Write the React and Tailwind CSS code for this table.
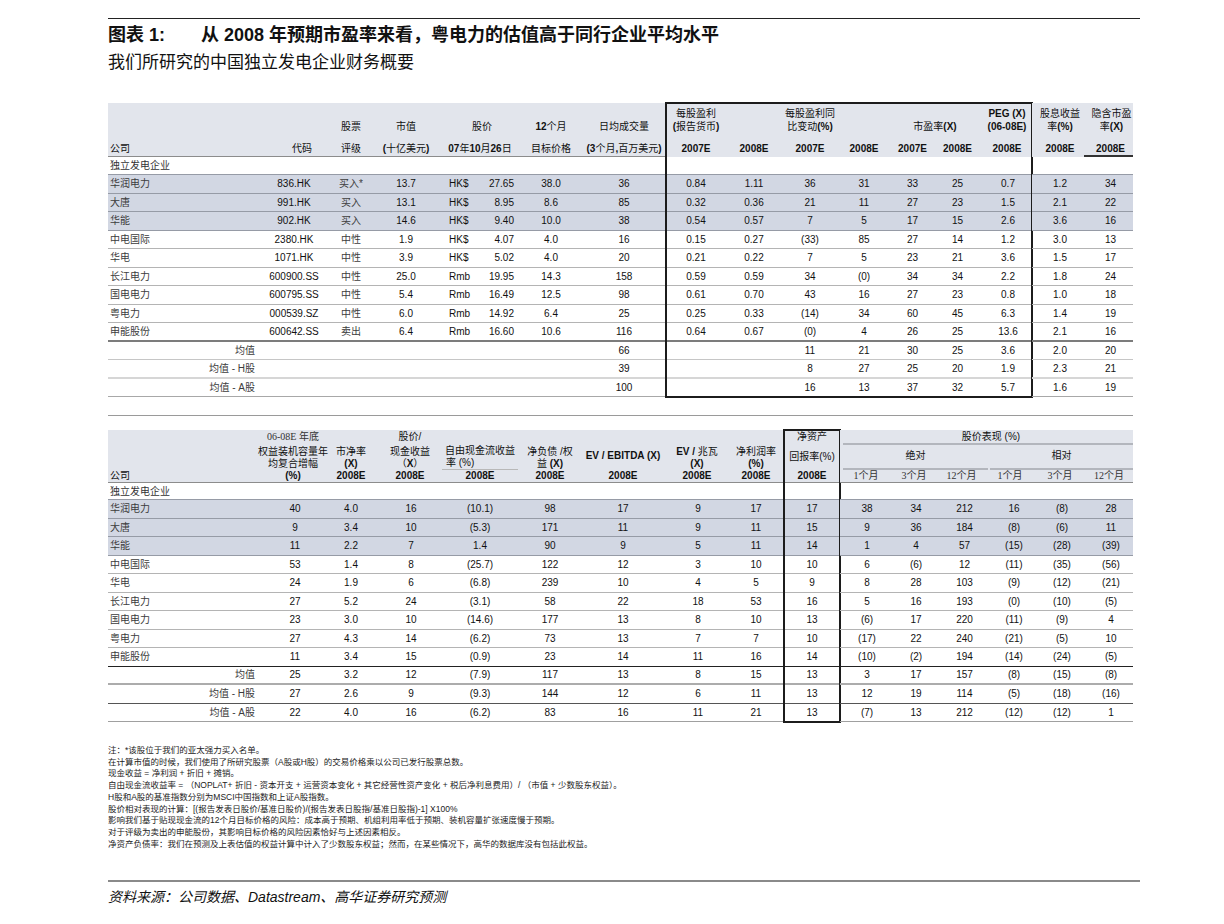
import React from 'react';

const SANS = "font-['Liberation_Sans','Noto_Sans_CJK_SC',sans-serif]";
const SERIF = "font-['Liberation_Serif','Noto_Sans_CJK_SC',serif]";
const HEAD_BG = 'bg-[#e2e5ec]';
const SHADE = 'bg-[#d2d7e3]';

// ascii runs are bold in the header labels, CJK stays regular
function H({ t }) {
  const parts = t.split(/([\x21-\x7e][\x20-\x7e]*[\x21-\x7e]|[\x21-\x7e])/).filter(Boolean);
  return parts.map((p, i) =>
    /[\x21-\x7e]/.test(p) ? <b key={i} className="font-bold">{p}</b> : <span key={i}>{p}</span>
  );
}

const t1Rows = [
  { shade: true, line: 'border-b border-[#969ba6]', cells: ['华润电力', '836.HK', '买入*', '13.7', 'HK$', '27.65', '38.0', '36', '0.84', '1.11', '36', '31', '33', '25', '0.7', '1.2', '34'] },
  { shade: true, line: 'border-b border-[#969ba6]', cells: ['大唐', '991.HK', '买入', '13.1', 'HK$', '8.95', '8.6', '85', '0.32', '0.36', '21', '11', '27', '23', '1.5', '2.1', '22'] },
  { shade: true, line: 'border-b border-[#969ba6]', cells: ['华能', '902.HK', '买入', '14.6', 'HK$', '9.40', '10.0', '38', '0.54', '0.57', '7', '5', '17', '15', '2.6', '3.6', '16'] },
  { line: 'border-b border-[#b4b4b4]', cells: ['中电国际', '2380.HK', '中性', '1.9', 'HK$', '4.07', '4.0', '16', '0.15', '0.27', '(33)', '85', '27', '14', '1.2', '3.0', '13'] },
  { line: 'border-b border-[#b4b4b4]', cells: ['华电', '1071.HK', '中性', '3.9', 'HK$', '5.02', '4.0', '20', '0.21', '0.22', '7', '5', '23', '21', '3.6', '1.5', '17'] },
  { line: 'border-b border-[#b4b4b4]', cells: ['长江电力', '600900.SS', '中性', '25.0', 'Rmb', '19.95', '14.3', '158', '0.59', '0.59', '34', '(0)', '34', '34', '2.2', '1.8', '24'] },
  { line: 'border-b border-[#b4b4b4]', cells: ['国电电力', '600795.SS', '中性', '5.4', 'Rmb', '16.49', '12.5', '98', '0.61', '0.70', '43', '16', '27', '23', '0.8', '1.0', '18'] },
  { line: 'border-b border-[#b4b4b4]', cells: ['粤电力', '000539.SZ', '中性', '6.0', 'Rmb', '14.92', '6.4', '25', '0.25', '0.33', '(14)', '34', '60', '45', '6.3', '1.4', '19'] },
  { line: 'border-b-2 border-[#7c7c7c]', cells: ['申能股份', '600642.SS', '卖出', '6.4', 'Rmb', '16.60', '10.6', '116', '0.64', '0.67', '(0)', '4', '26', '25', '13.6', '2.1', '16'] },
  { avg: true, line: 'border-b border-[#c6c6c6]', cells: ['均值', '', '', '', '', '', '', '66', '', '', '11', '21', '30', '25', '3.6', '2.0', '20'] },
  { avg: true, line: 'border-b-2 border-[#d6d6d6]', cells: ['均值 - H股', '', '', '', '', '', '', '39', '', '', '8', '27', '25', '20', '1.9', '2.3', '21'] },
  { avg: true, line: 'border-b border-[#a8a8a8]', cells: ['均值 - A股', '', '', '', '', '', '', '100', '', '', '16', '13', '37', '32', '5.7', '1.6', '19'] },
];

const t2Rows = [
  { shade: true, line: 'border-b border-[#969ba6]', cells: ['华润电力', '40', '4.0', '16', '(10.1)', '98', '17', '9', '17', '17', '38', '34', '212', '16', '(8)', '28'] },
  { shade: true, line: 'border-b border-[#969ba6]', cells: ['大唐', '9', '3.4', '10', '(5.3)', '171', '11', '9', '11', '15', '9', '36', '184', '(8)', '(6)', '11'] },
  { shade: true, line: 'border-b border-[#969ba6]', cells: ['华能', '11', '2.2', '7', '1.4', '90', '9', '5', '11', '14', '1', '4', '57', '(15)', '(28)', '(39)'] },
  { line: 'border-b border-[#b4b4b4]', cells: ['中电国际', '53', '1.4', '8', '(25.7)', '122', '12', '3', '10', '10', '6', '(6)', '12', '(11)', '(35)', '(56)'] },
  { line: 'border-b border-[#b4b4b4]', cells: ['华电', '24', '1.9', '6', '(6.8)', '239', '10', '4', '5', '9', '8', '28', '103', '(9)', '(12)', '(21)'] },
  { line: 'border-b border-[#b4b4b4]', cells: ['长江电力', '27', '5.2', '24', '(3.1)', '58', '22', '18', '53', '16', '5', '16', '193', '(0)', '(10)', '(5)'] },
  { line: 'border-b border-[#b4b4b4]', cells: ['国电电力', '23', '3.0', '10', '(14.6)', '177', '13', '8', '10', '13', '(6)', '17', '220', '(11)', '(9)', '4'] },
  { line: 'border-b border-[#b4b4b4]', cells: ['粤电力', '27', '4.3', '14', '(6.2)', '73', '13', '7', '7', '10', '(17)', '22', '240', '(21)', '(5)', '10'] },
  { line: 'border-b border-[#222]', cells: ['申能股份', '11', '3.4', '15', '(0.9)', '23', '14', '11', '16', '14', '(10)', '(2)', '194', '(14)', '(24)', '(5)'] },
  { avg: true, line: 'border-b-2 border-[#acacac]', cells: ['均值', '25', '3.2', '12', '(7.9)', '117', '13', '8', '15', '13', '3', '17', '157', '(8)', '(15)', '(8)'] },
  { avg: true, line: 'border-b border-[#555]', cells: ['均值 - H股', '27', '2.6', '9', '(9.3)', '144', '12', '6', '11', '13', '12', '19', '114', '(5)', '(18)', '(16)'] },
  { avg: true, line: 'border-b border-[#a0a0a0]', cells: ['均值 - A股', '22', '4.0', '16', '(6.2)', '83', '16', '11', '21', '13', '(7)', '13', '212', '(12)', '(12)', '1'] },
];

const T1_LEFT = [
  'w-[150px] pl-[2px] text-left',
  'w-[72px] text-center',
  'w-[42px] text-center',
  'w-[68px] text-center',
  'w-[38px] pl-[9px] text-left',
  'w-[42px] pr-[6px] text-right',
  'w-[62px] text-center',
  'w-[84px] text-center',
];
const T1_BOX = ['w-[60px] text-center', 'w-[56px] text-center', 'w-[56px] text-center', 'w-[52px] text-center', 'w-[45px] text-center', 'w-[45px] text-center', 'w-[52px] pl-[4px] text-center'];
const T1_RIGHT = ['w-[52px] pl-[4px] text-center', 'w-[49px] pl-[4px] text-center'];

const T2_LEFT = [
  'w-[150px] pl-[2px] text-left',
  'w-[68px] pl-[6px] text-center',
  'w-[50px] text-center',
  'w-[64px] pl-[6px] text-center',
  'w-[80px] text-center',
  'w-[60px] text-center',
  'w-[86px] text-center',
  'w-[60px] pl-[4px] text-center',
  'w-[58px] pl-[2px] text-center',
];
const T2_BOX = ['w-[56px] text-center'];
const T2_RIGHT = ['w-[50px] pl-[4px] text-center', 'w-[48px] pl-[4px] text-center', 'w-[47px] pl-[6px] text-center', 'w-[50px] pl-[8px] text-center', 'w-[50px] pl-[4px] text-center', 'w-[48px] pl-[4px] text-center'];

const hasCjk = (v) => /[\u4e00-\u9fff]/.test(v);

function Rows({ rows, specs, from, first, firstH }) {
  return (
    <>
      <div className={`${firstH} flex items-center border-b border-[#969ba6]`}>
        {first && <div className="pl-[2px] text-[#333]">独立发电企业</div>}
      </div>
      {rows.map((r, i) => (
        <div key={i} className={`h-[18.5px] flex items-center ${r.shade ? SHADE : ''} ${r.line}`}>
          {specs.map((s, j) => {
            const v = r.cells[from + j];
            const isName = first && j === 0;
            const cls = isName && r.avg ? 'w-[150px] pr-[3px] text-right' : s;
            return (
              <div key={j} className={`${cls} shrink-0 whitespace-nowrap ${hasCjk(v) ? 'text-[#3c3c3c]' : 'text-[#111]'}`}>
                {v}
              </div>
            );
          })}
        </div>
      ))}
    </>
  );
}

function Top({ w, lines }) {
  return (
    <div className={`${w} shrink-0 text-center leading-[13px] whitespace-nowrap`}>
      {lines.map((l, i) => (
        <div key={i}><H t={l} /></div>
      ))}
    </div>
  );
}

function Bot({ w, t, extra = '' }) {
  return (
    <div className={`${w} shrink-0 whitespace-nowrap leading-[14px] ${extra}`}>
      <H t={t} />
    </div>
  );
}

function TableOne() {
  return (
    <div className="flex text-[10px]">
      <div className="flex flex-col w-[558px]">
        <div className={`h-[54px] ${HEAD_BG} flex flex-col`}>
          <div className="h-[39px] flex items-end pb-[9px]">
            <div className="w-[150px] shrink-0" />
            <div className="w-[72px] shrink-0" />
            <Top w="w-[42px]" lines={['股票']} />
            <Top w="w-[68px]" lines={['市值']} />
            <Top w="w-[80px] pl-[4px]" lines={['股价']} />
            <Top w="w-[62px]" lines={['12个月']} />
            <Top w="w-[84px]" lines={['日均成交量']} />
          </div>
          <div className="h-[15px] flex items-start border-b border-[#8c8c8c]">
            <Bot w="w-[150px] pl-[2px]" t="公司" />
            <Bot w="w-[72px] text-right pr-[18px]" t="代码" />
            <Bot w="w-[42px] text-center" t="评级" />
            <Bot w="w-[68px] text-center" t="(十亿美元)" />
            <Bot w="w-[80px] text-center" t="07年10月26日" />
            <Bot w="w-[62px] text-center" t="目标价格" />
            <Bot w="w-[84px] text-center" t="(3个月,百万美元)" />
          </div>
        </div>
        <Rows rows={t1Rows} specs={T1_LEFT} from={0} first firstH="h-[18px]" />
      </div>

      <div className="flex flex-col w-[366px] outline-2 outline-[#1c1c1c] outline-offset-[-1px]">
        <div className={`h-[54px] ${HEAD_BG} flex flex-col`}>
          <div className="h-[39px] flex items-end pb-[9px]">
            <Top w="w-[60px]" lines={['每股盈利', '(报告货币)']} />
            <div className="w-[56px] shrink-0" />
            <Top w="w-[56px]" lines={['每股盈利同', '比变动(%)']} />
            <div className="w-[52px] shrink-0" />
            <Top w="w-[90px]" lines={['市盈率(X)']} />
            <Top w="w-[52px] pl-[2px]" lines={['PEG (X)', '(06-08E)']} />
          </div>
          <div className="h-[15px] flex items-start">
            <Bot w="w-[60px] text-center" t="2007E" />
            <Bot w="w-[56px] text-center" t="2008E" />
            <Bot w="w-[56px] text-center" t="2007E" />
            <Bot w="w-[52px] text-center" t="2008E" />
            <Bot w="w-[45px] text-center" t="2007E" />
            <Bot w="w-[45px] text-center" t="2008E" />
            <Bot w="w-[52px] text-center pl-[2px]" t="2008E" />
          </div>
        </div>
        <Rows rows={t1Rows} specs={T1_BOX} from={8} firstH="h-[18px]" />
      </div>

      <div className="flex flex-col w-[101px]">
        <div className={`h-[54px] ${HEAD_BG} flex flex-col`}>
          <div className="h-[39px] flex items-end pb-[9px]">
            <Top w="w-[52px] pl-[4px]" lines={['股息收益', '率(%)']} />
            <Top w="w-[49px] pl-[6px]" lines={['隐含市盈', '率(X)']} />
          </div>
          <div className="h-[15px] flex items-start">
            <Bot w="w-[52px] text-center pl-[4px]" t="2008E" />
            <Bot w="w-[49px] text-center pl-[4px] h-[15px] border-b-2 border-[#333]" t="2008E" />
          </div>
        </div>
        <Rows rows={t1Rows} specs={T1_RIGHT} from={15} firstH="h-[18px]" />
      </div>
    </div>
  );
}

// a header cell of table 2: lines stacked from the bottom
function Col({ w, children, extra = '' }) {
  return (
    <div className={`${w} shrink-0 h-full flex flex-col justify-end items-center leading-[12px] whitespace-nowrap ${extra}`}>
      {children}
    </div>
  );
}

function TableTwo() {
  return (
    <div className="flex text-[10px]">
      <div className="flex flex-col w-[676px]">
        <div className={`h-[53px] ${HEAD_BG} flex border-b border-[#8c8c8c]`}>
          <Col w="w-[150px]" extra="!items-start pl-[2px]">
            <div>公司</div>
          </Col>
          <Col w="w-[68px] pl-[2px]">
            <div className={`mb-[3px] ${SERIF} text-[#333]`}>06-08E 年底</div>
            <div>权益装机容量年</div>
            <div>均复合增幅</div>
            <div className="font-bold">(%)</div>
          </Col>
          <Col w="w-[50px]">
            <div>市净率</div>
            <div className="font-bold">(X)</div>
            <div className="font-bold">2008E</div>
          </Col>
          <Col w="w-[64px] pl-[4px]">
            <div className="mb-[3px]">股价/</div>
            <div>现金收益</div>
            <div>（<b>X</b>）</div>
            <div className="font-bold">2008E</div>
          </Col>
          <Col w="w-[80px]">
            <div>自由现金流收益</div>
            <div className="self-stretch pl-[4px] border-b border-[#b8b8b8] mx-[2px]">率 (%)</div>
            <div className="font-bold">2008E</div>
          </Col>
          <Col w="w-[60px]">
            <div>净负债 /权</div>
            <div>益 <b>(X)</b></div>
            <div className="font-bold">2008E</div>
          </Col>
          <Col w="w-[86px]">
            <div className="font-bold mb-[8px]">EV / EBITDA (X)</div>
            <div className="font-bold">2008E</div>
          </Col>
          <Col w="w-[60px] pl-[2px]">
            <div><b>EV /</b> 兆瓦</div>
            <div className="font-bold">(X)</div>
            <div className="font-bold">2008E</div>
          </Col>
          <Col w="w-[58px] pl-[2px]">
            <div>净利润率</div>
            <div className="font-bold">(%)</div>
            <div className="font-bold">2008E</div>
          </Col>
        </div>
        <Rows rows={t2Rows} specs={T2_LEFT} from={0} first firstH="h-[17px]" />
      </div>

      <div className="flex flex-col w-[56px] outline-2 outline-[#1c1c1c] outline-offset-[-1px]">
        <div className={`h-[53px] ${HEAD_BG} flex border-b border-[#8c8c8c]`}>
          <Col w="w-[56px]">
            <div className="mb-[8px]">净资产</div>
            <div className="mb-[7px]">回报率(%)</div>
            <div className="font-bold">2008E</div>
          </Col>
        </div>
        <Rows rows={t2Rows} specs={T2_BOX} from={9} firstH="h-[17px]" />
      </div>

      <div className="flex flex-col w-[293px]">
        <div className={`h-[53px] ${HEAD_BG} flex flex-col border-b border-[#8c8c8c] pt-[1px] leading-[12px] whitespace-nowrap`}>
          <div className="text-center border-b-2 border-[#b3b6bd] ml-[3px] pl-[6px]">股价表现 (%)</div>
          <div className="flex">
            <div className="w-[145px] ml-[3px] mr-[2px] pt-[5px] pb-[6px] border-b-2 border-[#b3b6bd] text-center">绝对</div>
            <div className="w-[143px] pt-[5px] pb-[6px] border-b-2 border-[#b3b6bd] text-center">相对</div>
          </div>
          <div className={`flex ${SERIF} text-[#333]`}>
            <div className="w-[50px] text-center pl-[2px]">1个月</div>
            <div className="w-[48px] text-center">3个月</div>
            <div className="w-[47px] text-center">12个月</div>
            <div className="w-[50px] text-center">1个月</div>
            <div className="w-[50px] text-center">3个月</div>
            <div className="w-[48px] text-center">12个月</div>
          </div>
        </div>
        <Rows rows={t2Rows} specs={T2_RIGHT} from={10} firstH="h-[17px]" />
      </div>
    </div>
  );
}

const notes = [
  '注：*该股位于我们的亚太强力买入名单。',
  '在计算市值的时候，我们使用了所研究股票（A股或H股）的交易价格乘以公司已发行股票总数。',
  '现金收益 = 净利润 + 折旧 + 摊销。',
  '自由现金流收益率 = （NOPLAT+ 折旧 - 资本开支 + 运营资本变化 + 其它经营性资产变化 + 税后净利息费用）/ （市值 + 少数股东权益）。',
  'H股和A股的基准指数分别为MSCI中国指数和上证A股指数。',
  '股价相对表现的计算：[(报告发表日股价/基准日股价)/(报告发表日股指/基准日股指)-1] X100%',
  '影响我们基于贴现现金流的12个月目标价格的风险：成本高于预期、机组利用率低于预期、装机容量扩张速度慢于预期。',
  '对于评级为卖出的申能股份，其影响目标价格的风险因素恰好与上述因素相反。',
  '净资产负债率：我们在预测及上表估值的权益计算中计入了少数股东权益；然而，在某些情况下，高华的数据库没有包括此权益。',
];

export default function App() {
  return (
    <div className={`w-[1224px] h-[924px] bg-white overflow-hidden ${SANS} text-[#111]`}>
      <div className="ml-[108px] pt-[18px]">
        <div className="w-[1032px] border-t border-[#222]" />
        <div className="mt-[5px] h-[22px] leading-[22px] text-[18px] font-bold flex">
          <span className="w-[93px]">图表 1:</span>
          <span>从 2008 年预期市盈率来看，粤电力的估值高于同行企业平均水平</span>
        </div>
        <div className="mt-[6px] h-[22px] leading-[22px] text-[17px]">我们所研究的中国独立发电企业财务概要</div>

        <div className="mt-[29px]">
          <TableOne />
        </div>

        <div className="mt-[18px] w-[1025px] border-t border-[#9a9a9a]" />

        <div className="mt-[14px]">
          <TableTwo />
        </div>

        <div className="mt-[23px] text-[8.5px] leading-[11.7px] text-[#222]">
          {notes.map((n, i) => (
            <div key={i} className="whitespace-nowrap">{n}</div>
          ))}
        </div>

        <div className="mt-[30px] w-[1032px] border-t-2 border-[#8a8a8a]" />
        <div className="mt-[6px] h-[18px] leading-[18px] text-[14px] italic">资料来源：公司数据、Datastream、高华证券研究预测</div>
      </div>
    </div>
  );
}
